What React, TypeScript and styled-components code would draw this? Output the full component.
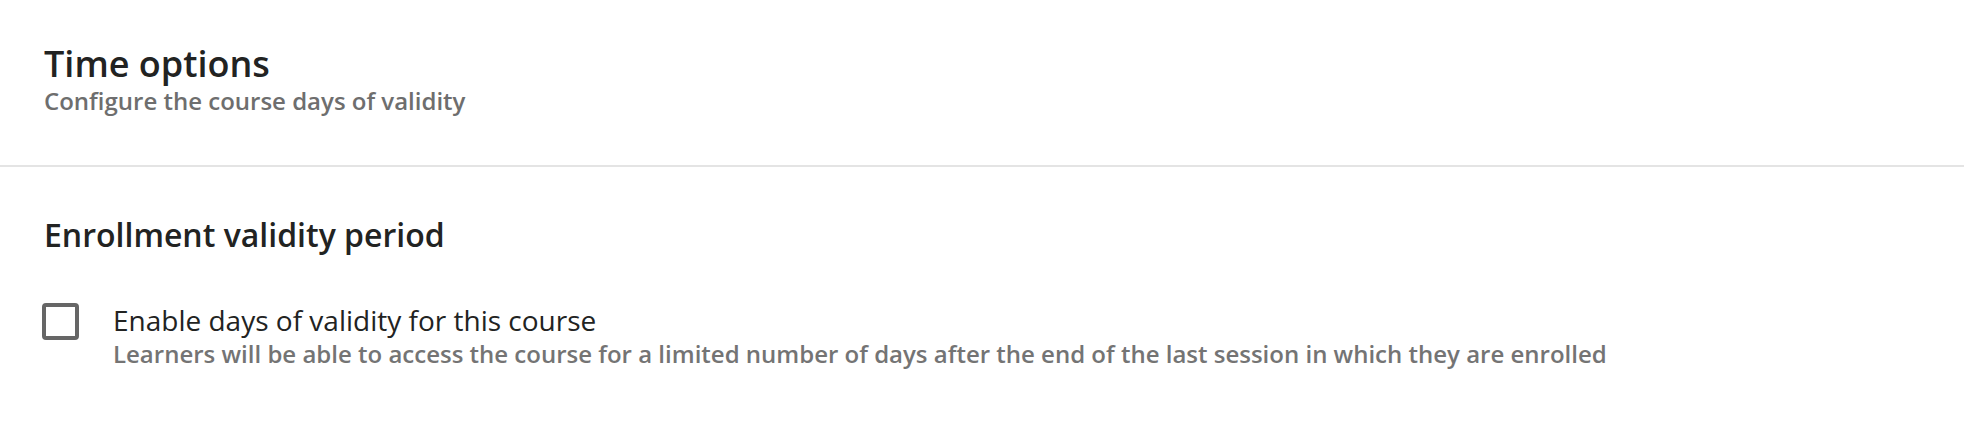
import React from "react";
import styled, { createGlobalStyle } from "styled-components";

const Global = createGlobalStyle`
  html, body { margin: 0; padding: 0; background: #ffffff; }
  body { font-family: "Open Sans", "Noto Sans", sans-serif; color: #222322; }
  * { box-sizing: border-box; }
`;

const Page = styled.div`
  width: 100%;
  display: flex;
  flex-direction: column;
`;

const Header = styled.header`
  padding: 42px 44px 0;
  height: 167px;
  display: flex;
  flex-direction: column;
  border-bottom: 2px solid #e4e4e4;
`;

const Title = styled.h1`
  margin: 0;
  font-size: 36px;
  line-height: 44px;
  font-weight: 600;
  color: #222322;
`;

const Subtitle = styled.p`
  margin: 0;
  font-size: 24px;
  line-height: 30px;
  font-weight: 600;
  color: #6e6e6e;
`;

const Section = styled.section`
  padding: 48px 44px 0;
  display: flex;
  flex-direction: column;
  gap: 47px;
`;

const SectionTitle = styled.h2`
  margin: 0;
  font-size: 32px;
  line-height: 40px;
  font-weight: 600;
  color: #222322;
`;

const OptionRow = styled.label`
  display: flex;
  align-items: flex-start;
  gap: 34px;
  cursor: pointer;
`;

const Box = styled.span<{ $checked?: boolean }>`
  flex: none;
  width: 37px;
  height: 37px;
  margin: 1px 0 0 -2px;
  border: 4px solid #666666;
  border-radius: 4px;
  background: ${(p) => (p.$checked ? "#666666" : "#fff")};
`;

const OptionText = styled.div`
  display: flex;
  flex-direction: column;
`;

const OptionLabel = styled.span`
  font-size: 28px;
  line-height: 36px;
  font-weight: 400;
  color: #222322;
`;

const OptionHint = styled.span`
  font-size: 24px;
  line-height: 32px;
  font-weight: 600;
  color: #747474;
`;

export default function App() {
  const [checked, setChecked] = React.useState(false);
  return (
    <Page>
      <Global />
      <Header>
        <Title>Time options</Title>
        <Subtitle>Configure the course days of validity</Subtitle>
      </Header>
      <Section>
        <SectionTitle>Enrollment validity period</SectionTitle>
        <OptionRow onClick={() => setChecked((c) => !c)}>
          <Box $checked={checked} />
          <OptionText>
            <OptionLabel>Enable days of validity for this course</OptionLabel>
            <OptionHint>
              Learners will be able to access the course for a limited number of days after the end of the last session in which they are enrolled
            </OptionHint>
          </OptionText>
        </OptionRow>
      </Section>
    </Page>
  );
}
